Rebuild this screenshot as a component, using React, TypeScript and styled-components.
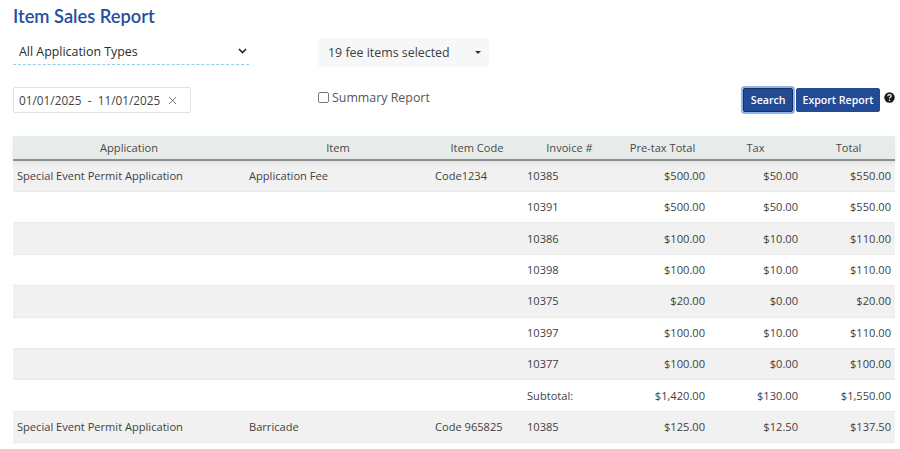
import React from "react";
import styled, { createGlobalStyle } from "styled-components";

const Global = createGlobalStyle`
  html, body { margin: 0; padding: 0; background: #fff; overflow: hidden; height: 449px; }
  body { font-family: "Open Sans", "Liberation Sans", sans-serif; color: #3b3b3b; }
`;

const Page = styled.div`
  width: 900px;
  height: 449px;
  overflow: hidden;
  padding: 5px 5px 0 13px;
  box-sizing: border-box;
`;

const Title = styled.h1`
  margin: 0;
  font-family: "Lato", "Liberation Sans", sans-serif;
  font-size: 18.3px;
  line-height: 22px;
  font-weight: 600;
  color: #234f9e;
`;

const FilterGrid = styled.div`
  display: grid;
  grid-template-columns: 305px 1fr;
  margin-top: 11px;
`;

const TypeSelect = styled.div`
  width: 236px;
  height: 27px;
  box-sizing: border-box;
  padding: 0 0 0 6px;
  border-bottom: 1px dashed #8fcdee;
  display: flex;
  align-items: center;
  justify-content: space-between;
  font-size: 12.4px;
  color: #2b2b2b;
  svg { margin-right: 2px; }
`;

const FeeDropdown = styled.div`
  width: 171px;
  height: 29px;
  box-sizing: border-box;
  padding: 0 8px 0 10px;
  background: #f6f7f8;
  border-radius: 3px;
  display: flex;
  align-items: center;
  justify-content: space-between;
  font-size: 12.4px;
  color: #3d3d3d;
`;

const Caret = styled.span`
  width: 0;
  height: 0;
  border-left: 3px solid transparent;
  border-right: 3px solid transparent;
  border-top: 3px solid #333;
`;

const ControlRow = styled.div`
  display: grid;
  grid-template-columns: 305px 1fr auto;
  margin-top: 20px;
  height: 49px;
`;

const DateBox = styled.div`
  width: 178px;
  height: 26px;
  box-sizing: border-box;
  border: 1px solid #e2e2e2;
  border-radius: 2px;
  padding: 0 13px 0 5px;
  display: flex;
  align-items: center;
  justify-content: space-between;
  font-size: 11.8px;
  color: #444;
  white-space: pre;
`;

const SummaryLabel = styled.label`
  display: flex;
  align-items: center;
  gap: 3px;
  height: 20px;
  font-size: 12.4px;
  color: #555;
`;

const Box = styled.span`
  width: 9px;
  height: 9px;
  border: 1px solid #777;
  border-radius: 2px;
  background: #fff;
`;

const Actions = styled.div`
  display: flex;
  align-items: flex-start;
  gap: 3px;
`;

const ActionButton = styled.button<{ $focused?: boolean }>`
  height: 24px;
  margin-top: 1px;
  padding: 0 ${(p) => (p.$focused ? "6.5px" : "5.5px")};
  border: 1px solid ${(p) => (p.$focused ? "#1c2f57" : "#234a94")};
  border-radius: 2px;
  background: #234a94;
  color: #fff;
  font-family: inherit;
  font-size: 10.6px;
  font-weight: 600;
  box-shadow: ${(p) => (p.$focused ? "0 0 0 2px #8db4ec" : "none")};
`;

const Help = styled.span`
  display: flex;
  margin-top: 5px;
  margin-left: 1px;
`;

const Table = styled.div`
  width: 882px;
  font-size: 11.1px;
`;

const Row = styled.div<{ $shaded?: boolean }>`
  display: grid;
  grid-template-columns: 232px 186px 92px 93px 93px 93px 93px;
  height: 31.4px;
  padding-bottom: 1px;
  box-sizing: border-box;
  align-items: center;
  background: ${(p) => (p.$shaded ? "#f1f1f1" : "#fff")};
  border-bottom: 1px solid #e9e9e9;
  color: #3f3f3f;
`;

const HeadRow = styled(Row)`
  position: relative;
  height: 24.6px;
  padding: 1px 0 0;
  background: #e7ecea;
  border-bottom: 2px solid #8c8f8e;
  box-shadow: 0 2px 5px rgba(0, 0, 0, 0.08);
  color: #4a4a4a;
`;

const HeadCell = styled.div`
  text-align: center;
`;

const Cell = styled.div<{ $right?: boolean }>`
  padding: 0 4px;
  text-align: ${(p) => (p.$right ? "right" : "left")};
  white-space: nowrap;
`;

const heads = ["Application", "Item", "Item Code", "Invoice #", "Pre-tax Total", "Tax", "Total"];

const rows = [
  ["Special Event Permit Application", "Application Fee", "Code1234", "10385", "$500.00", "$50.00", "$550.00"],
  ["", "", "", "10391", "$500.00", "$50.00", "$550.00"],
  ["", "", "", "10386", "$100.00", "$10.00", "$110.00"],
  ["", "", "", "10398", "$100.00", "$10.00", "$110.00"],
  ["", "", "", "10375", "$20.00", "$0.00", "$20.00"],
  ["", "", "", "10397", "$100.00", "$10.00", "$110.00"],
  ["", "", "", "10377", "$100.00", "$0.00", "$100.00"],
  ["", "", "", "Subtotal:", "$1,420.00", "$130.00", "$1,550.00"],
  ["Special Event Permit Application", "Barricade", "Code 965825", "10385", "$125.00", "$12.50", "$137.50"],
  ["", "", "", "", "", "", ""],
];

export default function App() {
  return (
    <Page>
      <Global />
      <Title>Item Sales Report</Title>
      <FilterGrid>
        <TypeSelect>
          All Application Types
          <svg width="9" height="6" viewBox="0 0 9 6" fill="none">
            <path d="M1 1l3.5 3.5L8 1" stroke="#222" strokeWidth="1.6" />
          </svg>
        </TypeSelect>
        <FeeDropdown>
          19 fee items selected
          <Caret />
        </FeeDropdown>
      </FilterGrid>
      <ControlRow>
        <DateBox>
          01/01/2025  -  11/01/2025
          <svg width="9" height="9" viewBox="0 0 9 9" fill="none">
            <path d="M1 1l7 7M8 1L1 8" stroke="#777" strokeWidth="1" />
          </svg>
        </DateBox>
        <SummaryLabel>
          <Box />
          Summary Report
        </SummaryLabel>
        <Actions>
          <ActionButton $focused>Search</ActionButton>
          <ActionButton>Export Report</ActionButton>
          <Help>
            <svg width="11" height="11" viewBox="0 0 11 11">
              <circle cx="5.5" cy="5.5" r="5.2" fill="#1a1a1a" />
              <path d="M3.8 4.2c0-1 .8-1.5 1.7-1.5s1.7.5 1.7 1.4c0 1.2-1.7 1.1-1.7 2.3" fill="none" stroke="#fff" strokeWidth="1.2" />
              <circle cx="5.5" cy="8.2" r=".75" fill="#fff" />
            </svg>
          </Help>
        </Actions>
      </ControlRow>
      <Table>
        <HeadRow>
          {heads.map((h) => (
            <HeadCell key={h}>{h}</HeadCell>
          ))}
        </HeadRow>
        {rows.map((r, i) => (
          <Row key={i} $shaded={i % 2 === 0}>
            {r.map((c, j) => (
              <Cell key={j} $right={j >= 4}>
                {c}
              </Cell>
            ))}
          </Row>
        ))}
      </Table>
    </Page>
  );
}
